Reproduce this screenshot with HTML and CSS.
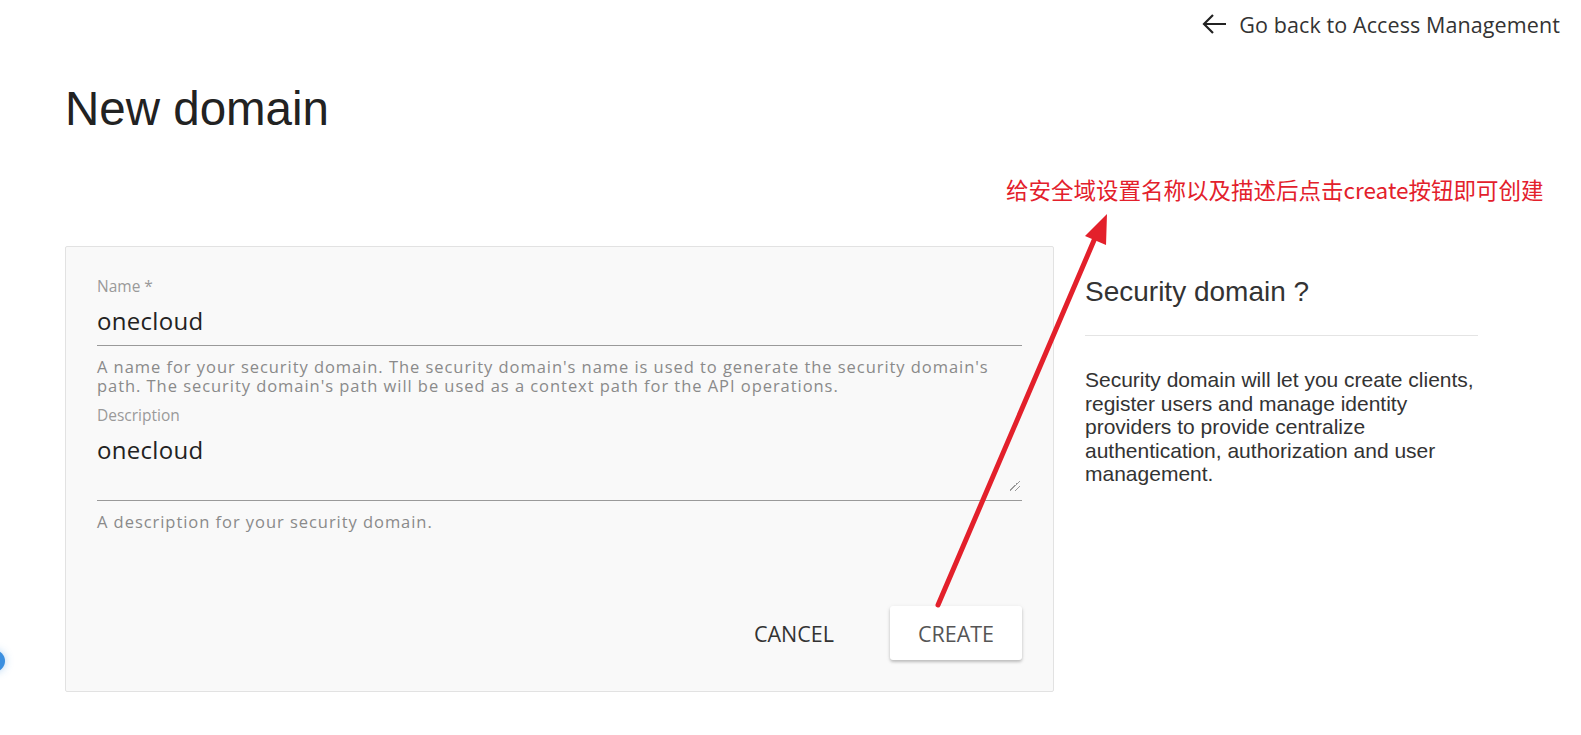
FILE: index.html
```html
<!DOCTYPE html>
<html lang="en">
<head>
    <meta charset="UTF-8">
    <meta name="viewport" content="width=device-width, initial-scale=1.0">
    <title>New domain</title>
    <link rel="stylesheet" href="styles.css">
</head>
<body>
    <header class="topbar">
        <a class="back-link" href="#">
            <svg class="back-icon" viewBox="0 0 26 24" width="26" height="24">
                <path d="M25 12H3 M12 3l-9 9 9 9" fill="none" stroke="#222" stroke-width="2.2"/>
            </svg>
            <span>Go back to Access Management</span>
        </a>
    </header>

    <main class="page">
        <h1 class="page-title">New domain</h1>

        <p class="note">给安全域设置名称以及描述后点击create按钮即可创建</p>

        <div class="content">
            <form class="card">
                <!-- name -->
                <div class="field">
                    <label class="field-label">Name *</label>
                    <div class="field-input">onecloud</div>
                    <div class="field-hint">A name for your security domain. The security domain's name is used to generate the security domain's path. The security domain's path will be used as a context path for the API operations.</div>
                </div>
                <!-- description -->
                <div class="field">
                    <label class="field-label">Description</label>
                    <div class="field-input field-area">
                        onecloud
                        <span class="resize-grip"></span>
                    </div>
                    <div class="field-hint">A description for your security domain.</div>
                </div>

                <div class="actions">
                    <button type="button" class="btn btn-flat">CANCEL</button>
                    <button type="button" class="btn btn-raised">CREATE</button>
                </div>
            </form>

            <aside class="help">
                <h2 class="help-title">Security domain ?</h2>
                <p class="help-text">Security domain will let you create clients, register users and manage identity providers to provide centralize authentication, authorization and user management.</p>
            </aside>
        </div>
    </main>

    <span class="fab-peek"></span>

    <svg class="annotation" width="1581" height="735" viewBox="0 0 1581 735">
        <line x1="938" y1="605" x2="1095" y2="238" stroke="#e3202b" stroke-width="5" stroke-linecap="round"/>
        <polygon points="1107,214 1106,245 1085,236" fill="#e3202b"/>
    </svg>
</body>
</html>
```

FILE: styles.css
```css
body {
    margin: 0;
    background-color: #fff;
    font-family: "Open Sans", "Liberation Sans", Arial, sans-serif;
    color: #222;
    position: relative;
    overflow: hidden;
}

.topbar {
    height: 48px;
    display: flex;
    justify-content: flex-end;
    align-items: center;
    padding-right: 21px;
}
.back-link {
    display: flex;
    align-items: center;
    gap: 12px;
    color: #333;
    text-decoration: none;
    font-size: 21.5px;
    letter-spacing: 0.1px;
}

.page {
    padding-left: 65px;
}
.page-title {
    margin: 35px 0 0;
    font-family: "Liberation Sans", Arial, sans-serif;
    font-weight: normal;
    font-size: 47.5px;
    line-height: 52px;
    color: #222;
}

.note {
    margin: 54px 0 0 941px;
    height: 0;
    font-family: "Noto Sans CJK SC", "Open Sans", sans-serif;
    font-size: 22.5px;
    line-height: 30px;
    color: #e3202b;
    white-space: nowrap;
    transform: translateY(-15px);
}

.content {
    display: flex;
    margin-top: 57px;
}

.card {
    width: 925px;
    padding: 29px 31px 31px 31px;
    background-color: #f9f9f9;
    border: 1px solid #e2e2e2;
    border-radius: 2px;
}

.field {
    margin-bottom: 10px;
}
.field-label {
    display: block;
    font-size: 15.5px;
    line-height: 20px;
    color: #9a9a9a;
}
.field-input {
    margin-top: 10px;
    padding-bottom: 9px;
    font-size: 24px;
    letter-spacing: 0.3px;
    line-height: 30px;
    color: #222;
    border-bottom: 1.5px solid #9a9a9a;
}
.field-area {
    position: relative;
    height: 65px;
    padding-bottom: 0;
}
.resize-grip {
    position: absolute;
    right: 2px;
    bottom: 9px;
    width: 10px;
    height: 10px;
    background: linear-gradient(135deg, transparent 45%, #999 45%, #999 52%, transparent 52%, transparent 72%, #999 72%, #999 79%, transparent 79%);
}
.field-hint {
    margin-top: 11px;
    font-size: 16.5px;
    letter-spacing: 0.95px;
    line-height: 19px;
    color: #8a8a8a;
}

.actions {
    display: flex;
    justify-content: flex-end;
    align-items: center;
    gap: 56px;
    margin-top: 75px;
}
.btn {
    font-family: "Open Sans", "Liberation Sans", Arial, sans-serif;
    font-size: 21.5px;
    border: none;
    background: transparent;
    cursor: pointer;
    color: #333;
}
.btn-flat {
    padding: 0;
}
.btn-raised {
    width: 132px;
    height: 54px;
    background-color: #fff;
    color: #555;
    border-radius: 3px;
    box-shadow: 0 2px 3px rgba(0,0,0,0.2), 0 1px 5px rgba(0,0,0,0.08);
}

.help {
    width: 393px;
    margin-left: 31px;
    font-family: "Liberation Sans", Arial, sans-serif;
}
.help-title {
    margin: 29px 0 0;
    font-weight: normal;
    font-size: 28px;
    line-height: 34px;
    color: #333;
    padding-bottom: 26px;
    border-bottom: 1px solid #e4e4e4;
}
.help-text {
    margin: 32px 0 0;
    font-size: 21px;
    line-height: 23.5px;
    color: #333;
}

.fab-peek {
    position: absolute;
    left: -17px;
    top: 650px;
    width: 22px;
    height: 22px;
    border-radius: 50%;
    background-color: #3b8fe0;
    box-shadow: 0 0 8px rgba(59,143,224,0.4);
}

.annotation {
    position: absolute;
    top: 0;
    left: 0;
    pointer-events: none;
}
```
